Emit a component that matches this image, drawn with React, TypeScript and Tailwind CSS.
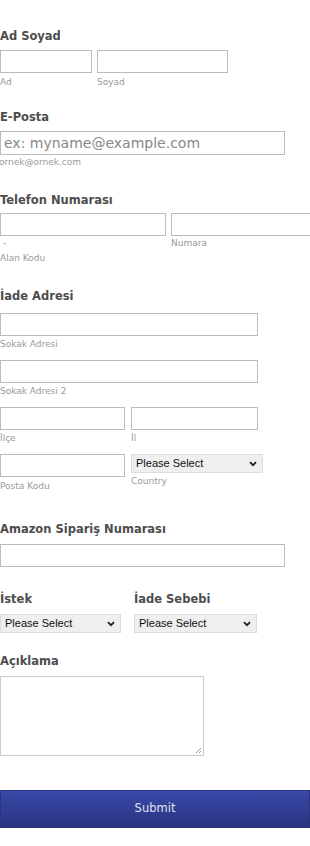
import React from "react";

const labelCls = "h-[15px] leading-[15px] text-[11.5px] font-bold text-[#4d4d4d]";
const subCls = "h-[12px] leading-[12px] text-[9px] text-[#999] whitespace-nowrap";
const inputCls = "h-[23px] border border-[#bbb] bg-white shrink-0";

function Select({ width }: { width: string }) {
  return (
    <div
      className={`${width} h-[19px] border border-[#ddd] bg-[#efefef] flex items-center justify-between pl-[4px] pr-[5px] shrink-0`}
    >
      <span className="text-[11px] text-[#111] font-['Liberation_Sans',Arial,sans-serif] leading-none">
        Please Select
      </span>
      <svg width="8" height="6" viewBox="0 0 8 6">
        <path d="M1 1.2 L4 4.2 L7 1.2" stroke="#222" strokeWidth="1.8" fill="none" />
      </svg>
    </div>
  );
}

export default function App() {
  return (
    <div className="w-[310px] h-[846px] bg-white overflow-hidden font-['DejaVu_Sans',Verdana,sans-serif] pt-[29px]">
      <div className={labelCls}>Ad Soyad</div>
      <div className="mt-[6px] flex gap-[5px]">
        <div className={`${inputCls} w-[92px]`} />
        <div className={`${inputCls} w-[131px]`} />
      </div>
      <div className="mt-[3px] flex">
        <div className={`${subCls} w-[97px]`}>Ad</div>
        <div className={subCls}>Soyad</div>
      </div>

      <div className={`${labelCls} mt-[22px]`}>E-Posta</div>
      <div className="mt-[6px] h-[24px] w-[285px] border border-[#bbb] flex items-center pl-[3px]">
        <span className="text-[14px] text-[#888] leading-none">ex: myname@example.com</span>
      </div>
      <div className={`${subCls} mt-[1px] -ml-px`}>ornek@ornek.com</div>

      <div className={`${labelCls} mt-[25px]`}>Telefon Numarası</div>
      <div className="mt-[5px] flex gap-[5px]">
        <div className={`${inputCls} w-[166px]`} />
        <div className={`${inputCls} w-[150px]`} />
      </div>
      <div className="mt-[1px] flex">
        <div className="w-[171px]">
          <div className={`${subCls} pl-[3px]`}>-</div>
          <div className={`${subCls} mt-[3px]`}>Alan Kodu</div>
        </div>
        <div className={subCls}>Numara</div>
      </div>

      <div className={`${labelCls} mt-[25px]`}>İade Adresi</div>
      <div className={`${inputCls} mt-[9px] w-[258px]`} />
      <div className={`${subCls} mt-[2px]`}>Sokak Adresi</div>
      <div className={`${inputCls} mt-[10px] w-[258px]`} />
      <div className={`${subCls} mt-[2px]`}>Sokak Adresi 2</div>
      <div className="mt-[10px] flex gap-[6px]">
        <div className={`${inputCls} w-[125px]`} />
        <div className={`${inputCls} w-[127px]`} />
      </div>
      <div className="mt-[2px] flex">
        <div className={`${subCls} w-[131px]`}>İlçe</div>
        <div className={subCls}>İl</div>
      </div>
      <div className="mt-[10px] flex gap-[6px] items-start">
        <div className="w-[125px]">
          <div className={`${inputCls} w-[125px]`} />
          <div className={`${subCls} mt-[3px]`}>Posta Kodu</div>
        </div>
        <div>
          <Select width="w-[132px]" />
          <div className={`${subCls} mt-[2px]`}>Country</div>
        </div>
      </div>

      <div className={`${labelCls} mt-[30px]`}>Amazon Sipariş Numarası</div>
      <div className={`${inputCls} mt-[7px] w-[285px]`} />

      <div className="mt-[25px] flex gap-[13px]">
        <div className="w-[121px]">
          <div className={labelCls}>İstek</div>
          <div className="mt-[7px]">
            <Select width="w-[121px]" />
          </div>
        </div>
        <div>
          <div className={labelCls}>İade Sebebi</div>
          <div className="mt-[7px]">
            <Select width="w-[123px]" />
          </div>
        </div>
      </div>

      <div className={`${labelCls} mt-[21px]`}>Açıklama</div>
      <div className="mt-[7px] w-[204px] h-[80px] border border-[#ccc] relative">
        <svg className="absolute right-[1px] bottom-[1px]" width="7" height="7" viewBox="0 0 7 7">
          <path d="M6 1 L1 6 M6 4 L4 6" stroke="#999" strokeWidth="1" />
        </svg>
      </div>

      <button className="mt-[34px] w-[310px] h-[38px] bg-gradient-to-b from-[#3b4aa9] to-[#28337f] border border-[#2a3480] text-[#dfe2f0] text-[11.5px] flex items-center justify-center">
        Submit
      </button>
    </div>
  );
}
